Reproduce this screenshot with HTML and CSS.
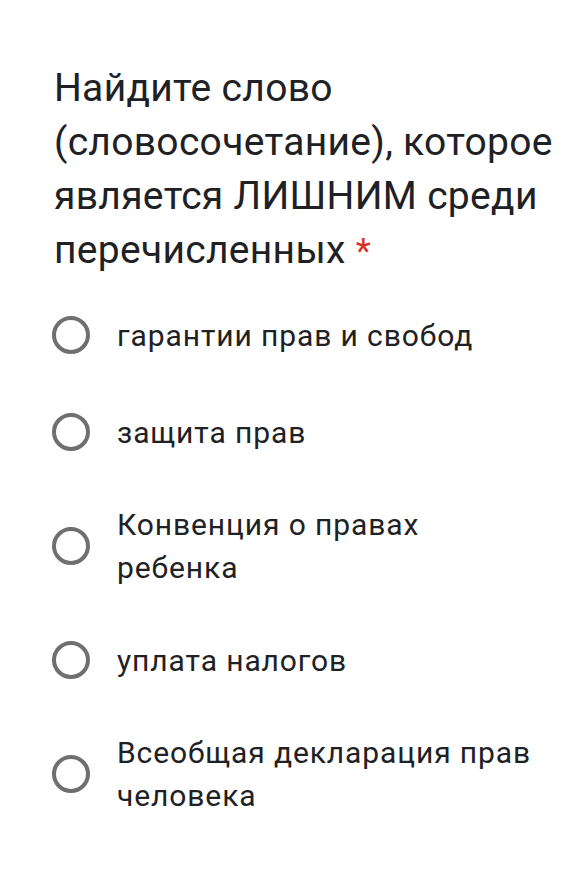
FILE: index.html
```html
<!DOCTYPE html>
<html lang="ru">
<head>
<meta charset="utf-8">
<link rel="stylesheet" href="styles.css">
</head>
<body>
<div class="question">
  <div class="title">Найдите слово (словосочетание), которое является ЛИШНИМ среди перечисленных<span class="req">*</span></div>
  <div class="options">
    <div class="option"><span class="radio"></span><span class="label">гарантии прав и свобод</span></div>
    <div class="option"><span class="radio"></span><span class="label">защита прав</span></div>
    <div class="option"><span class="radio"></span><span class="label">Конвенция о правах<br>ребенка</span></div>
    <div class="option"><span class="radio"></span><span class="label">уплата налогов</span></div>
    <div class="option"><span class="radio"></span><span class="label">Всеобщая декларация прав человека</span></div>
  </div>
</div>
</body>
</html>
```
FILE: styles.css
```css
html, body {
  margin: 0;
  padding: 0;
  background: #ffffff;
}
body {
  font-family: Roboto, "Noto Sans", sans-serif;
  color: #202124;
}
.question {
  padding: 61px 10px 0 54px;
}
.title {
  font-size: 39px;
  line-height: 54px;
  letter-spacing: 0.3px;
  width: 512px;
}
.req {
  color: #d93025;
  font-size: 35px;
  margin-left: 10px;
}
.options {
  display: flex;
  flex-direction: column;
  gap: 45px;
  margin-top: 30px;
  margin-left: -2px;
}
.option {
  display: flex;
  align-items: center;
  min-height: 52px;
}
.radio {
  flex: none;
  width: 30px;
  height: 30px;
  border: 4px solid #6f6f6f;
  border-radius: 50%;
  margin-right: 27px;
}
.label {
  font-size: 30px;
  line-height: 43px;
  letter-spacing: 0.9px;
  width: 450px;
}
```
